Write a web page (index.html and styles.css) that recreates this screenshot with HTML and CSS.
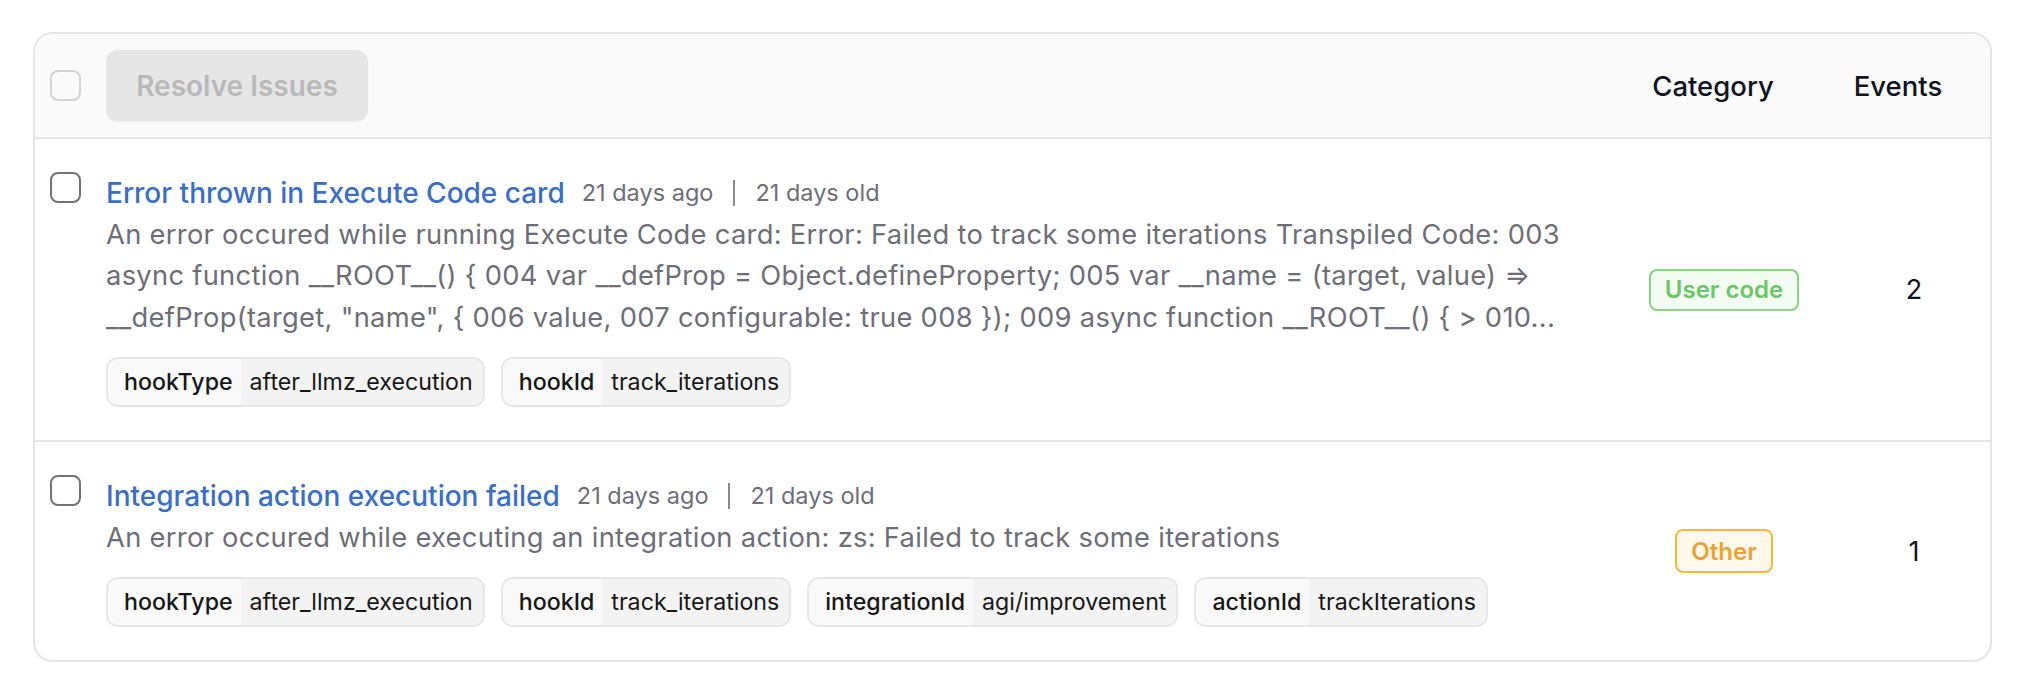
FILE: index.html
```html
<!DOCTYPE html>
<html lang="en">
<head>
<meta charset="utf-8">
<title>Issues</title>
<link rel="stylesheet" href="styles.css">
</head>
<body>
<div class="card">
  <div class="row head">
    <div class="cb-cell"><span class="cb cb-disabled"></span></div>
    <div class="main"><button class="resolve" disabled>Resolve Issues</button></div>
    <div class="col-cat head-cell">Category</div>
    <div class="col-ev head-cell">Events</div>
  </div>

  <div class="row issue">
    <div class="cb-cell"><span class="cb"></span></div>
    <div class="main">
      <div class="title-line">
        <a class="title">Error thrown in Execute Code card</a>
        <span class="date">21 days ago</span>
        <span class="sep"></span>
        <span class="date">21 days old</span>
      </div>
      <p class="desc">An error occured while running Execute Code card: Error: Failed to track some iterations Transpiled Code: 003 async function __ROOT__() { 004 var __defProp = Object.defineProperty; 005 var __name = (target, value) ⇒ __defProp(target, "name", { 006 value, 007 configurable: true 008 }); 009 async function __ROOT__() { &gt; 010...</p>
      <div class="tags">
        <span class="tag"><span class="tag-k">hookType</span><span class="tag-v">after_llmz_execution</span></span>
        <span class="tag"><span class="tag-k">hookId</span><span class="tag-v">track_iterations</span></span>
      </div>
    </div>
    <div class="col-cat"><span class="badge badge-user">User code</span></div>
    <div class="col-ev count">2</div>
  </div>

  <div class="row issue last">
    <div class="cb-cell"><span class="cb"></span></div>
    <div class="main">
      <div class="title-line">
        <a class="title">Integration action execution failed</a>
        <span class="date">21 days ago</span>
        <span class="sep"></span>
        <span class="date">21 days old</span>
      </div>
      <p class="desc">An error occured while executing an integration action: zs: Failed to track some iterations</p>
      <div class="tags">
        <span class="tag"><span class="tag-k">hookType</span><span class="tag-v">after_llmz_execution</span></span>
        <span class="tag"><span class="tag-k">hookId</span><span class="tag-v">track_iterations</span></span>
        <span class="tag"><span class="tag-k">integrationId</span><span class="tag-v">agi/improvement</span></span>
        <span class="tag"><span class="tag-k">actionId</span><span class="tag-v">trackIterations</span></span>
      </div>
    </div>
    <div class="col-cat"><span class="badge badge-other">Other</span></div>
    <div class="col-ev count">1</div>
  </div>
</div>
</body>
</html>
```

FILE: styles.css
```css
* { box-sizing: border-box; }

html, body {
  margin: 0;
  padding: 0;
  background: #ffffff;
}

body {
  font-family: Inter, "Liberation Sans", sans-serif;
  color: #111827;
  padding: 32px 0 0 33px;
}

.card {
  width: 1959px;
  border: 2px solid #e5e5e5;
  border-radius: 20px;
  overflow: hidden;
  background: #ffffff;
  box-shadow: 0 1px 3px rgba(0, 0, 0, 0.04);
}

.row {
  display: grid;
  grid-template-columns: 56px 1fr 228px 152px;
  padding-left: 15px;
}

.head {
  height: 105px;
  align-items: center;
  background: #fafafa;
  border-bottom: 2px solid #e6e6e6;
}

.issue {
  padding-top: 33px;
  padding-bottom: 33px;
  align-items: center;
  border-bottom: 2px solid #e6e6e6;
}

.issue.last {
  border-bottom: none;
}

.issue .cb-cell {
  align-self: start;
}

.cb {
  display: block;
  width: 31px;
  height: 31px;
  border: 2px solid #737373;
  border-radius: 8px;
  background: #ffffff;
}

.cb-disabled {
  border-color: #d4d4d4;
  background: #fafafa;
}

.resolve {
  font-family: inherit;
  font-size: 28px;
  font-weight: 600;
  color: #b9b9b9;
  background: #e6e6e6;
  border: none;
  border-radius: 12px;
  width: 262px;
  height: 71px;
  padding: 0;
  box-shadow: 0 1px 2px rgba(0, 0, 0, 0.05);
}

.head-cell {
  font-size: 27.5px;
  font-weight: 500;
  color: #0f1220;
  text-align: center;
  padding-right: 32px;
}

.head-cell.col-cat {
  padding-right: 22px;
}

.col-cat, .col-ev {
  text-align: center;
}

.count {
  font-size: 27px;
  color: #0f1220;
}

.title-line {
  display: flex;
  align-items: center;
  height: 41.5px;
}

.title {
  font-size: 28px;
  font-weight: 500;
  color: #3a6fc4;
  margin-right: 17px;
}

.date {
  font-size: 23.5px;
  color: #6e6e78;
}

.sep {
  display: block;
  width: 2px;
  height: 26px;
  background: #8a8a8f;
  margin: 0 20px;
}

.desc {
  margin: 0;
  font-size: 27.3px;
  line-height: 41.5px;
  letter-spacing: 0.3px;
  color: #6e6e78;
  max-width: 1475px;
}

.tags {
  display: flex;
  flex-wrap: wrap;
  gap: 16px;
  margin-top: 19px;
}

.tag {
  display: flex;
  height: 50px;
  border: 2px solid #e6e6e8;
  border-radius: 12px;
  overflow: hidden;
  font-size: 23.2px;
  color: #171717;
}

.tag-k {
  display: flex;
  align-items: center;
  padding: 0 8px 0 16px;
  background: #f9f9f9;
  font-weight: 500;
}

.tag-v {
  display: flex;
  align-items: center;
  padding: 0 10px 0 9px;
  background: #f3f3f4;
}

.badge {
  display: inline-flex;
  align-items: center;
  height: 42px;
  padding: 0 14px;
  border: 2px solid;
  border-radius: 8px;
  font-size: 24px;
  font-weight: 600;
}

.badge-user {
  border-color: #84d77e;
  background: #f3fbf2;
  color: #6cc768;
}

.badge-other {
  height: 44px;
  border-color: #efb93a;
  background: #fef9ea;
  color: #e8a23a;
}
```
